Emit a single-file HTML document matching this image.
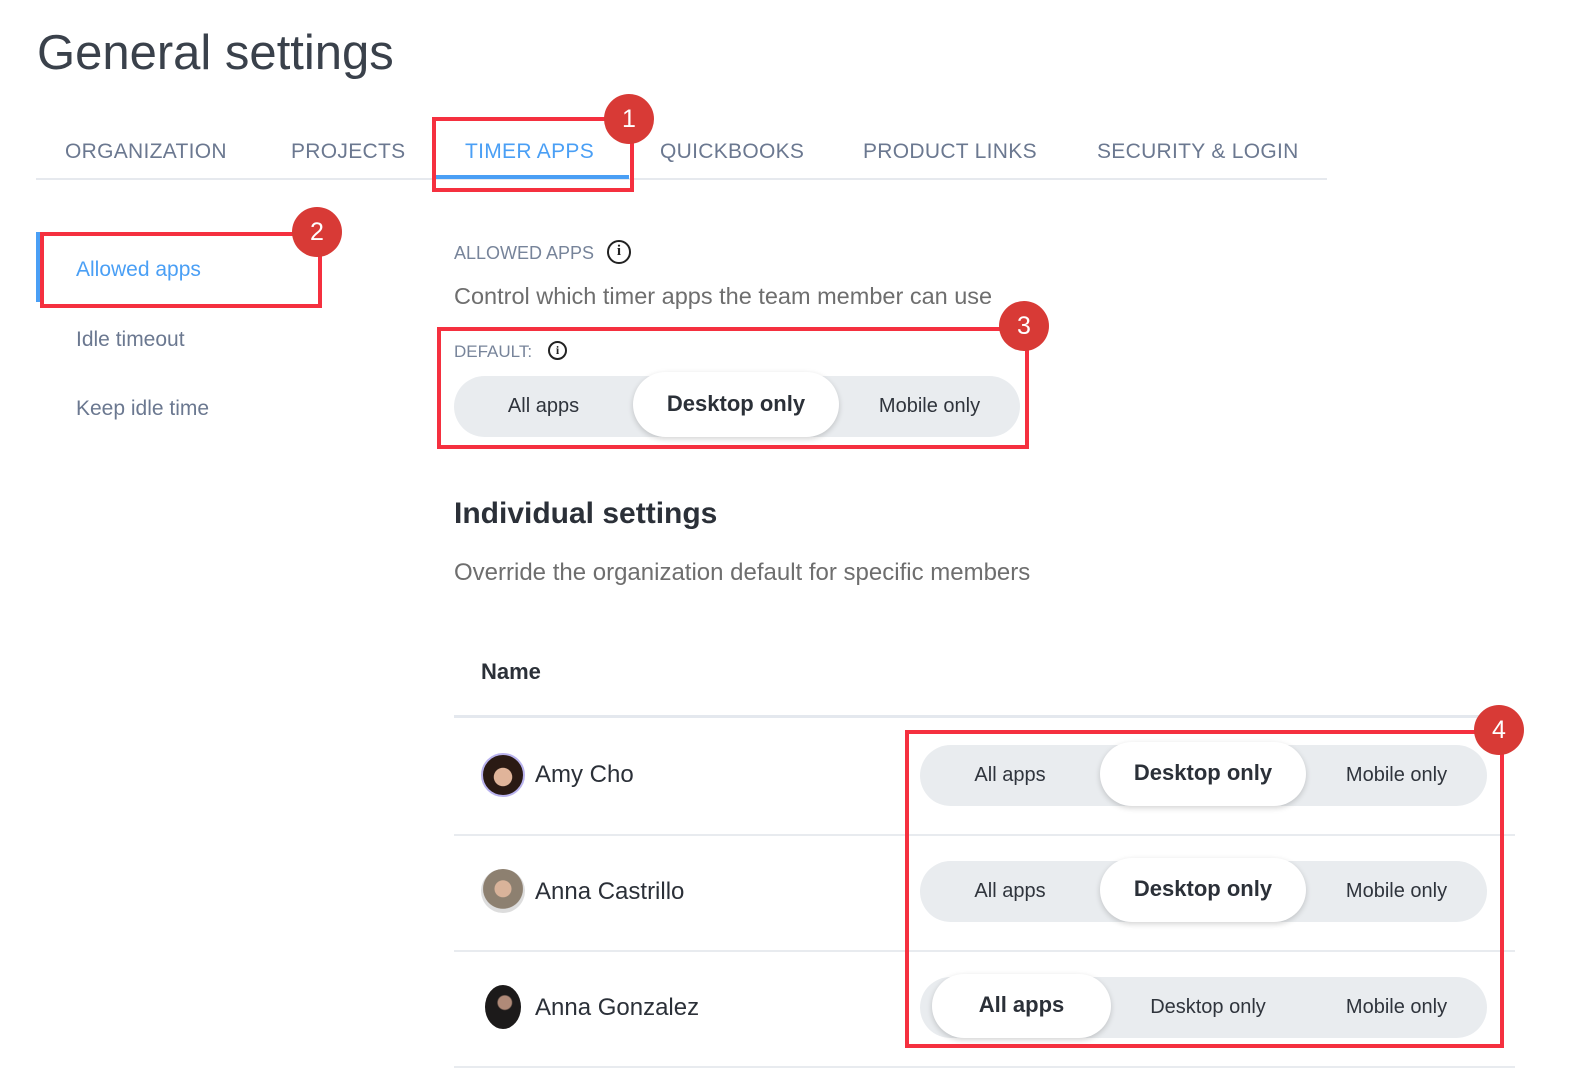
<!DOCTYPE html>
<html><head><meta charset="utf-8"><style>
*{margin:0;padding:0;box-sizing:border-box}
body{width:1576px;height:1074px;background:#fff;font-family:"Liberation Sans",sans-serif;position:relative;overflow:hidden}
.a{position:absolute;white-space:nowrap}
.tab{top:140px;font-size:21px;color:#6b7890;letter-spacing:0.3px}
.red{position:absolute;border:4px solid #f5303f}
.badge{position:absolute;width:50px;height:50px;border-radius:50%;background:#d83a36;color:#fff;font-size:25px;text-align:center;line-height:50px}
.nav{left:76px;font-size:21px;color:#6b7890}
.seg{position:absolute;background:#e9ecef;border-radius:31px;height:61px}
.seg span{position:absolute;top:0;line-height:61px;font-size:20px;color:#2f343c;text-align:center}
.sel{position:absolute;background:#fff;border-radius:33px;box-shadow:0 2px 6px rgba(0,0,0,.18)}
.sel b{display:block;text-align:center;font-size:22px;color:#2b3038}
.row{position:absolute;left:454px;width:1061px;height:2px;background:#e8ebef}
.av{position:absolute;left:481px;width:44px;height:44px;border-radius:50%;overflow:hidden}
.nm{left:535px;font-size:24px;color:#2b3038}
.info{position:absolute;border:2.5px solid #222;border-radius:50%;text-align:center;font-weight:bold;color:#222;font-family:"Liberation Serif",serif}
</style></head><body>
<div class="a" style="left:37px;top:25px;font-size:49px;color:#3a414b">General settings</div>

<div class="a tab" style="left:65px">ORGANIZATION</div>
<div class="a tab" style="left:291px">PROJECTS</div>
<div class="a tab" style="left:465px;color:#4a9ff5">TIMER APPS</div>
<div class="a tab" style="left:660px">QUICKBOOKS</div>
<div class="a tab" style="left:863px">PRODUCT LINKS</div>
<div class="a tab" style="left:1097px">SECURITY &amp; LOGIN</div>
<div class="a" style="left:36px;top:178px;width:1291px;height:2px;background:#e6e9ee"></div>
<div class="a" style="left:436px;top:175px;width:193px;height:4px;background:#4a9ff5"></div>
<div class="red" style="left:432px;top:117px;width:202px;height:75px"></div>
<div class="badge" style="left:604px;top:94px">1</div>

<div class="a" style="left:36px;top:232px;width:4px;height:70px;background:#4a9ff5"></div>
<div class="a nav" style="top:258px;color:#4a9ff5">Allowed apps</div>
<div class="a nav" style="top:328px">Idle timeout</div>
<div class="a nav" style="top:397px">Keep idle time</div>
<div class="red" style="left:40px;top:232px;width:282px;height:76px"></div>
<div class="badge" style="left:292px;top:207px">2</div>

<div class="a" style="left:454px;top:243px;font-size:18px;color:#77849a">ALLOWED APPS</div>
<div class="info" style="left:607px;top:240px;width:24px;height:24px;font-size:15px;line-height:19px">i</div>
<div class="a" style="left:454px;top:283px;font-size:23.5px;color:#6e6e6e">Control which timer apps the team member can use</div>
<div class="a" style="left:454px;top:342px;font-size:17px;color:#77849a">DEFAULT:</div>
<div class="info" style="left:548px;top:341px;width:19px;height:19px;font-size:12px;line-height:14px;border-width:2px">i</div>
<div class="seg" style="left:454px;top:376px;width:566px"><span style="left:0;width:179px">All apps</span><span style="left:385px;width:181px">Mobile only</span></div>
<div class="sel" style="left:633px;top:372px;width:206px;height:65px"><b style="line-height:63px">Desktop only</b></div>
<div class="red" style="left:437px;top:327px;width:592px;height:122px"></div>
<div class="badge" style="left:999px;top:301px">3</div>

<div class="a" style="left:454px;top:497px;font-size:30px;font-weight:bold;color:#2b3038">Individual settings</div>
<div class="a" style="left:454px;top:559px;font-size:24px;color:#6e6e6e">Override the organization default for specific members</div>
<div class="a" style="left:481px;top:659px;font-size:22px;font-weight:bold;color:#2b3038">Name</div>
<div class="row" style="top:715px;height:3px;background:#e4e8ee"></div>
<div class="row" style="top:834px"></div>
<div class="row" style="top:950px"></div>
<div class="row" style="top:1066px"></div>

<div class="av" style="top:753px;background:radial-gradient(circle at 50% 55%,#e0b49a 0 30%,#2a1a14 32%);border:2px solid #b9b3ee"></div>
<div class="a nm" style="top:761px">Amy Cho</div>
<div class="av" style="top:869px;background:radial-gradient(circle at 50% 45%,#d9b39a 0 25%,#8d8070 27% 60%,#ddd 62%)"></div>
<div class="a nm" style="top:878px">Anna Castrillo</div>
<div class="av" style="top:985px;left:485px;width:36px;background:radial-gradient(circle at 55% 40%,#b08a78 0 20%,#1c1a1a 24%)"></div>
<div class="a nm" style="top:994px">Anna Gonzalez</div>

<div class="seg" style="left:920px;top:745px;width:567px"><span style="left:0;width:180px">All apps</span><span style="left:386px;width:181px">Mobile only</span></div>
<div class="sel" style="left:1100px;top:742px;width:206px;height:64px"><b style="line-height:62px">Desktop only</b></div>
<div class="seg" style="left:920px;top:861px;width:567px"><span style="left:0;width:180px">All apps</span><span style="left:386px;width:181px">Mobile only</span></div>
<div class="sel" style="left:1100px;top:858px;width:206px;height:64px"><b style="line-height:62px">Desktop only</b></div>
<div class="seg" style="left:920px;top:977px;width:567px"><span style="left:190px;width:196px">Desktop only</span><span style="left:386px;width:181px">Mobile only</span></div>
<div class="sel" style="left:932px;top:974px;width:179px;height:64px"><b style="line-height:62px">All apps</b></div>
<div class="red" style="left:905px;top:730px;width:599px;height:318px"></div>
<div class="badge" style="left:1474px;top:705px">4</div>
</body></html>
